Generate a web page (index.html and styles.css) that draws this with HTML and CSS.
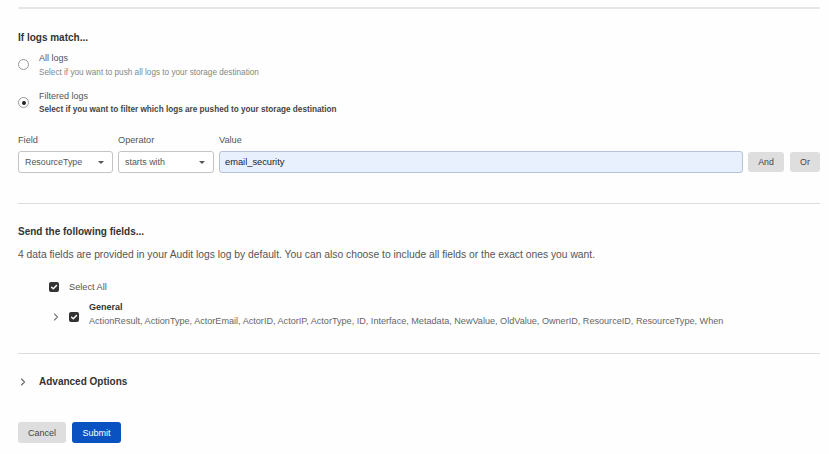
FILE: index.html
```html
<!DOCTYPE html>
<html>
<head>
<meta charset="utf-8">
<link rel="stylesheet" href="styles.css">
</head>
<body>
<div class="page">
  <div class="divider top"></div>

  <h3 class="section-title first">If logs match...</h3>

  <div class="radio-row">
    <span class="radio"></span>
    <div class="radio-text">
      <div class="radio-label">All logs</div>
      <div class="radio-help">Select if you want to push all logs to your storage destination</div>
    </div>
  </div>
  <div class="radio-row second">
    <span class="radio checked"></span>
    <div class="radio-text">
      <div class="radio-label">Filtered logs</div>
      <div class="radio-help bold">Select if you want to filter which logs are pushed to your storage destination</div>
    </div>
  </div>

  <div class="filter-row">
    <div class="field f-field">
      <label class="field-label">Field</label>
      <div class="select"><span>ResourceType</span><span class="caret"></span></div>
    </div>
    <div class="field f-op">
      <label class="field-label">Operator</label>
      <div class="select"><span>starts with</span><span class="caret"></span></div>
    </div>
    <div class="field f-value">
      <label class="field-label">Value</label>
      <div class="input">email_security</div>
    </div>
    <button class="btn gray and">And</button>
    <button class="btn gray or">Or</button>
  </div>

  <div class="divider mid"></div>

  <h3 class="section-title second">Send the following fields...</h3>
  <p class="desc">4 data fields are provided in your Audit logs log by default. You can also choose to include all fields or the exact ones you want.</p>

  <div class="tree">
    <div class="check-row all">
      <span class="checkbox"><svg viewBox="0 0 10 10" width="10" height="10"><path d="M2.6 5.2 L4.3 6.8 L7.5 3.4" fill="none" stroke="#fff" stroke-width="1.4" stroke-linecap="round" stroke-linejoin="round"/></svg></span>
      <span class="check-label">Select All</span>
    </div>
    <div class="check-row group">
      <svg class="chev" viewBox="0 0 8 10" width="8" height="10"><path d="M2.5 2 L5.5 5 L2.5 8" fill="none" stroke="#777" stroke-width="1.1" stroke-linecap="round" stroke-linejoin="round"/></svg>
      <span class="checkbox"><svg viewBox="0 0 10 10" width="10" height="10"><path d="M2.6 5.2 L4.3 6.8 L7.5 3.4" fill="none" stroke="#fff" stroke-width="1.4" stroke-linecap="round" stroke-linejoin="round"/></svg></span>
      <div class="group-text">
        <div class="group-title">General</div>
        <div class="group-fields">ActionResult, ActionType, ActorEmail, ActorID, ActorIP, ActorType, ID, Interface, Metadata, NewValue, OldValue, OwnerID, ResourceID, ResourceType, When</div>
      </div>
    </div>
  </div>

  <div class="divider low"></div>

  <div class="advanced">
    <svg class="chev" viewBox="0 0 8 10" width="8" height="10"><path d="M2.5 2 L5.5 5 L2.5 8" fill="none" stroke="#666" stroke-width="1.1" stroke-linecap="round" stroke-linejoin="round"/></svg>
    <span class="adv-label">Advanced Options</span>
  </div>

  <div class="actions">
    <button class="btn gray cancel">Cancel</button>
    <button class="btn primary submit">Submit</button>
  </div>
</div>
</body>
</html>
```

FILE: styles.css
```css
* { box-sizing: border-box; }
html, body { margin: 0; padding: 0; background: #fefefe; }
body {
  font-family: "Liberation Sans", Arial, sans-serif;
  color: #333;
  width: 829px;
  height: 454px;
  overflow: hidden;
}
.page { padding: 7px 9px 0 18px; }

.divider { height: 2px; background: #e6e6e6; }
.divider.mid { height: 1px; background: #dcdcdc; margin-top: 30px; }
.divider.low { height: 1px; background: #dcdcdc; margin-top: 26px; }

.section-title {
  margin: 0;
  font-size: 10px;
  font-weight: bold;
  color: #333;
  line-height: 12px;
}
.section-title.first { margin-top: 23px; }
.section-title.second { margin-top: 22px; }

.radio-row { display: flex; align-items: flex-start; margin-top: 9px; }
.radio-row.second { margin-top: 13px; }
.radio {
  width: 11px; height: 11px; border-radius: 50%;
  border: 1px solid #999; background: #fff;
  margin-top: 6px; margin-right: 10px;
  position: relative; flex: none;
}
.radio.checked::after {
  content: ""; position: absolute; left: 2.5px; top: 2.5px;
  width: 4px; height: 4px; border-radius: 50%; background: #222;
}
.radio-label { font-size: 9px; color: #555; line-height: 11px; }
.radio-help { font-size: 8.2px; color: #868686; line-height: 10px; margin-top: 4px; }
.radio-help.bold { font-weight: bold; color: #444; margin-top: 3px; }

.filter-row { display: flex; align-items: flex-end; margin-top: 20px; }
.field { display: flex; flex-direction: column; margin-right: 5px; }
.field-label { font-size: 9.2px; color: #555; line-height: 11px; margin-bottom: 5px; }
.f-field { width: 95px; }
.f-op { width: 96px; }
.f-value { width: 524px; margin-right: 5px; }
.select, .input {
  height: 22px; border: 1px solid #c4c4c4; border-radius: 3px;
  background: #fff; font-size: 8.9px; color: #555;
  display: flex; align-items: center; padding: 0 6px;
}
.select { justify-content: space-between; }
.caret {
  width: 0; height: 0;
  border-left: 3px solid transparent; border-right: 3px solid transparent;
  border-top: 3px solid #555; margin-right: 2px;
}
.input {
  background: #e8f0fd; border-color: #b6c3d6; color: #222; font-size: 9.3px;
  padding-left: 5px;
}
.btn {
  font-family: inherit; border: none; border-radius: 3px; cursor: default;
}
.btn.gray { background: #dedede; color: #444; }
.and, .or { height: 20px; font-size: 8.8px; margin-bottom: 1px; }
.and { width: 36px; margin-right: 6px; }
.or { width: 30px; }

.desc { margin: 11px 0 0; font-size: 10.3px; color: #555; line-height: 12px; }

.tree { margin-top: 21px; padding-left: 31px; }
.check-row { display: flex; align-items: center; }
.checkbox {
  width: 10px; height: 10px; border-radius: 2px; background: #333;
  display: flex; align-items: center; justify-content: center; flex: none;
}
.check-label { font-size: 9.2px; color: #555; margin-left: 10px; }
.check-row.group { align-items: flex-start; margin-top: 10px; margin-left: 3px; }
.check-row.group .chev { margin-top: 10px; margin-right: 9px; }
.check-row.group .checkbox { margin-top: 10px; }
.group-text { margin-left: 10px; }
.group-title { font-size: 9px; font-weight: bold; color: #333; line-height: 11px; }
.group-fields { font-size: 9.1px; color: #666; line-height: 11px; margin-top: 3px; }

.advanced { display: flex; align-items: center; margin-top: 22px; padding-left: 1px; }
.advanced .chev { margin-right: 12px; }
.adv-label { font-size: 10px; font-weight: bold; color: #333; }

.actions { display: flex; margin-top: 35px; }
.cancel { width: 48px; height: 21px; font-size: 9px; margin-right: 6px; }
.submit { width: 49px; height: 21px; font-size: 9px; background: #0a51c2; color: #fff; }
```
